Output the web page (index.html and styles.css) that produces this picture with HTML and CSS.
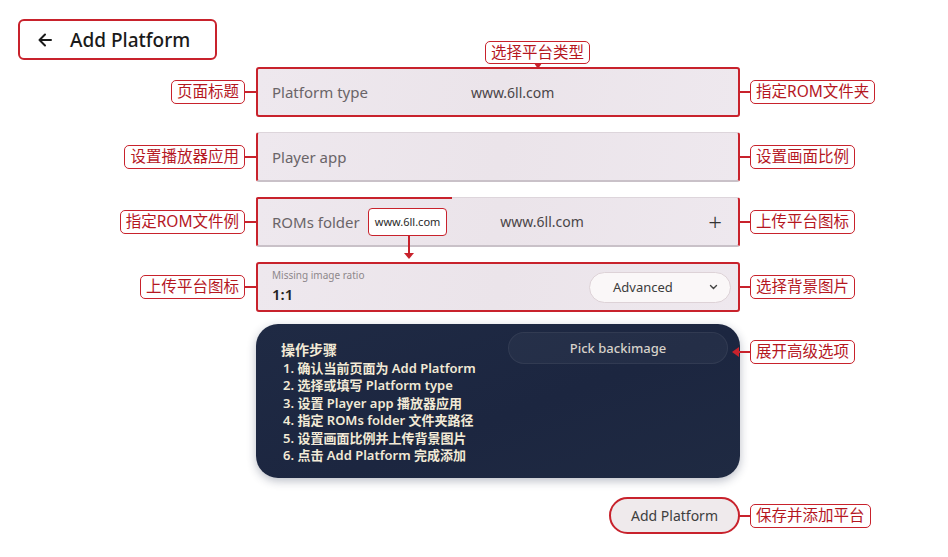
FILE: index.html
```html
<!DOCTYPE html>
<html lang="zh-CN">
  <head>
    <meta charset="utf-8" />
    <meta name="viewport" content="width=device-width, initial-scale=1.0" />
    <title>Add Platform</title>
    <link rel="stylesheet" href="styles.css">
  </head>
  <body>
    <div class="page">
      <div class="title-box">
        <svg class="back-icon" width="16" height="16" viewBox="0 0 16 16">
          <path d="M14 8H2.5M8 2.5L2.5 8L8 13.5" fill="none" stroke="#1a1a1a" stroke-width="2" stroke-linecap="round" stroke-linejoin="round" />
        </svg>
        <span>Add Platform</span>
      </div>

      <div class="rows">
        <!-- Platform type -->
        <div class="row">
          <div class="side side-left"><span class="note">页面标题</span><i class="link"></i></div>
          <div class="field field-red">
            <div class="note-top">
              <span class="note">选择平台类型</span>
              <i class="pointer-down"></i>
            </div>
            <span class="field-label">Platform type</span>
            <span class="field-url">www.6ll.com</span>
          </div>
          <div class="side side-right"><i class="link"></i><span class="note">指定ROM文件夹</span></div>
        </div>

        <!-- Player app -->
        <div class="row">
          <div class="side side-left"><span class="note">设置播放器应用</span><i class="link"></i></div>
          <div class="field field-sides">
            <span class="field-label">Player app</span>
          </div>
          <div class="side side-right"><i class="link"></i><span class="note">设置画面比例</span></div>
        </div>

        <!-- ROMs folder -->
        <div class="row">
          <div class="side side-left"><span class="note">指定ROM文件例</span><i class="link"></i></div>
          <div class="field field-sides field-roms">
            <span class="field-label">ROMs folder</span>
            <span class="url-tag">
              www.6ll.com
              <i class="pointer-long"></i>
            </span>
            <span class="field-url roms-url">www.6ll.com</span>
            <span class="plus">+</span>
          </div>
          <div class="side side-right"><i class="link"></i><span class="note">上传平台图标</span></div>
        </div>

        <!-- Missing image ratio -->
        <div class="row">
          <div class="side side-left"><span class="note">上传平台图标</span><i class="link"></i></div>
          <div class="field field-red field-ratio">
            <div class="ratio">
              <span class="ratio-caption">Missing image ratio</span>
              <span class="ratio-value">1:1</span>
            </div>
            <div class="select-pill">
              <span>Advanced</span>
              <svg width="9" height="6" viewBox="0 0 9 6"><path d="M1.5 1.5L4.5 4.5L7.5 1.5" fill="none" stroke="#444" stroke-width="1.4" stroke-linecap="round" /></svg>
            </div>
          </div>
          <div class="side side-right"><i class="link"></i><span class="note">选择背景图片</span></div>
        </div>

        <!-- steps panel -->
        <div class="row row-panel">
          <div class="side side-left"></div>
          <div class="panel">
            <div class="steps">
              <div class="steps-title">操作步骤</div>
              <div>1. 确认当前页面为 Add Platform</div>
              <div>2. 选择或填写 Platform type</div>
              <div>3. 设置 Player app 播放器应用</div>
              <div>4. 指定 ROMs folder 文件夹路径</div>
              <div>5. 设置画面比例并上传背景图片</div>
              <div>6. 点击 Add Platform 完成添加</div>
            </div>
            <div class="pick-pill">Pick backimage</div>
          </div>
          <div class="side side-right side-top"><i class="link link-arrow"></i><span class="note">展开高级选项</span></div>
        </div>

        <!-- submit -->
        <div class="row row-submit">
          <div class="side side-left"></div>
          <div class="submit-cell">
            <div class="submit-btn">Add Platform</div>
          </div>
          <div class="side side-right"><i class="link"></i><span class="note">保存并添加平台</span></div>
        </div>
      </div>
    </div>
  </body>
</html>
```

FILE: styles.css
```css
* {
  box-sizing: border-box;
}

body {
  margin: 0;
  background: #ffffff;
  font-family: "Noto Sans", "Noto Sans CJK SC", sans-serif;
  color: #222;
}

.page {
  width: 948px;
  height: 557px;
  padding: 19px 0 0 0;
  overflow: hidden;
}

.title-box {
  display: flex;
  align-items: center;
  gap: 17px;
  width: 199px;
  height: 41px;
  margin-left: 18px;
  padding-left: 17px;
  border: 2px solid #c8222c;
  border-radius: 6px;
  font-size: 19px;
  font-weight: 500;
  color: #1a1a1a;
}

.back-icon {
  flex: none;
}

.rows {
  display: flex;
  flex-direction: column;
  gap: 15px;
  margin-top: 7px;
}

.row {
  display: flex;
  align-items: stretch;
}

.side {
  display: flex;
  align-items: center;
}

.side-left {
  width: 256px;
  justify-content: flex-end;
}

.side-right {
  flex: 1;
}

.side-top {
  align-items: flex-start;
  padding-top: 16px;
}

/* red callout tags */
.note {
  display: inline-block;
  height: 24px;
  line-height: 21px;
  padding: 0 5px;
  border: 1.5px solid #c8222c;
  border-radius: 5px;
  background: #fff;
  color: #b5171f;
  font-size: 15.5px;
  white-space: nowrap;
}

.link {
  display: block;
  width: 11px;
  height: 2px;
  background: #c8222c;
}

.side-right .link {
  width: 10px;
}

.link-arrow {
  position: relative;
  width: 16px !important;
  margin-left: -6px;
  margin-top: 11px;
}

.link-arrow::before {
  content: "";
  position: absolute;
  left: -2px;
  top: -4px;
  border-width: 5px 7px 5px 0;
  border-style: solid;
  border-color: transparent #c8222c transparent transparent;
}

/* form fields */
.field {
  position: relative;
  display: flex;
  align-items: center;
  width: 484px;
  height: 50px;
  padding: 0 16px 0 14px;
  background: linear-gradient(100deg, #eee8ee 0%, #ebe4ea 50%, #eee8ee 100%);
  border-radius: 3px;
}

.field-red {
  border: 2px solid #c8222c;
}

.field-sides {
  border: 1px solid #ddd5db;
  border-left: 2px solid #c8222c;
  border-right: 2px solid #c8222c;
  border-bottom: 2px solid #c9c1c8;
}

.field-roms::before {
  content: "";
  position: absolute;
  left: -2px;
  top: -1px;
  width: 196px;
  height: 2px;
  background: #c8222c;
  border-radius: 2px 0 0 0;
}

.field-label {
  font-size: 15px;
  color: #6a6468;
}

.field-url {
  margin-left: 103px;
  font-size: 14px;
  color: #4a4548;
}

.roms-url {
  margin-left: 53px;
}

.note-top {
  position: absolute;
  left: 227px;
  top: -28px;
  display: flex;
  flex-direction: column;
  align-items: center;
}

.note-top .note {
  height: 23px;
  line-height: 20px;
}

.pointer-down {
  display: block;
  width: 0;
  height: 0;
  margin-top: -1px;
  border-width: 6px 4px 0 4px;
  border-style: solid;
  border-color: #c8222c transparent transparent transparent;
}

.url-tag {
  position: relative;
  margin-left: 8px;
  height: 28px;
  line-height: 25px;
  padding: 0 6px;
  background: #fff;
  border: 1.5px solid #c8222c;
  border-radius: 4px;
  font-size: 11px;
  color: #2a2a2a;
}

.pointer-long {
  position: absolute;
  left: 39px;
  top: 26px;
  width: 2px;
  height: 20px;
  background: #c8222c;
}

.pointer-long::after {
  content: "";
  position: absolute;
  left: -4px;
  bottom: -4px;
  border-width: 6px 5px 0 5px;
  border-style: solid;
  border-color: #c8222c transparent transparent transparent;
}

.plus {
  margin-left: auto;
  font-size: 24px;
  font-weight: 300;
  color: #333;
  line-height: 1;
}

.field-ratio {
  justify-content: space-between;
  padding-right: 7px;
}

.ratio {
  display: flex;
  flex-direction: column;
  gap: 2px;
  margin-top: -2px;
}

.ratio-caption {
  font-size: 10px;
  color: #8d878b;
}

.ratio-value {
  font-size: 15px;
  font-weight: 600;
  color: #222;
}

.select-pill {
  display: flex;
  align-items: center;
  justify-content: space-between;
  width: 142px;
  height: 31px;
  padding: 0 12px 0 23px;
  background: #faf7f8;
  border: 1px solid #ddd2d7;
  border-radius: 16px;
  font-size: 13px;
  color: #3c3c3c;
}

/* dark steps panel */
.row-panel {
  margin-top: -3px;
}

.panel {
  display: flex;
  justify-content: space-between;
  align-items: flex-start;
  width: 484px;
  height: 154px;
  padding: 8px 12px 0 25px;
  background: linear-gradient(160deg, #1f2a44 0%, #1c2640 55%, #1f2a42 100%);
  border-radius: 22px;
  box-shadow: 0 3px 10px rgba(30, 40, 70, 0.3);
}

.steps {
  margin-top: 9px;
  font-size: 13px;
  font-weight: 600;
  line-height: 17.5px;
  color: #f2ead6;
}

.steps-title {
  font-size: 14px;
  font-weight: 700;
  margin-bottom: 1px;
}

.steps-title ~ div {
  padding-left: 2px;
}

.pick-pill {
  width: 220px;
  height: 32px;
  line-height: 30px;
  text-align: center;
  background: rgba(255, 255, 255, 0.04);
  border: 1px solid rgba(255, 255, 255, 0.06);
  border-radius: 16px;
  font-size: 13px;
  font-weight: 500;
  color: #d6d1ca;
}

/* submit */
.row-submit {
  margin-top: 4px;
}

.submit-cell {
  display: flex;
  justify-content: flex-end;
  width: 484px;
}

.submit-btn {
  width: 131px;
  height: 37px;
  line-height: 33px;
  text-align: center;
  background: #efeaec;
  border: 2px solid #c8222c;
  border-radius: 19px;
  font-size: 14px;
  color: #3e3e3e;
}

.row-submit .side-right .link {
  width: 12px;
  margin-left: -2px;
}
```
